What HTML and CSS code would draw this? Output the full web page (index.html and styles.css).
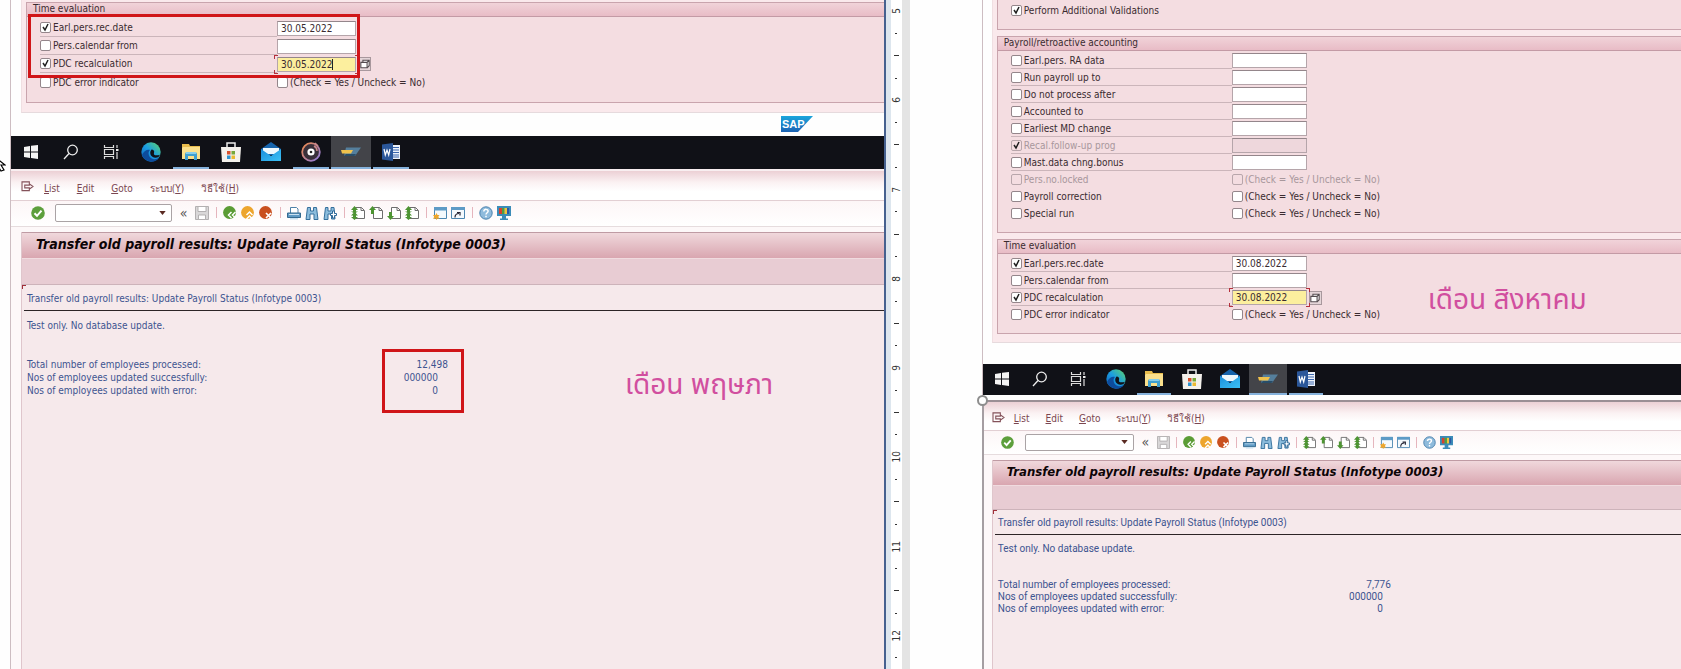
FILE: index.html
```html
<!DOCTYPE html>
<html lang="th">
<head>
<meta charset="utf-8">
<title>Transfer old payroll results</title>
<link rel="stylesheet" href="styles.css">
</head>
<body>
<svg class="sprite" aria-hidden="true">
  <defs>
    <linearGradient id="g-edge" x1="0" y1="1" x2="1" y2="0"><stop offset="0" stop-color="#0f5fb8"/><stop offset=".5" stop-color="#1b9de2"/><stop offset="1" stop-color="#5fd668"/></linearGradient>
    <linearGradient id="g-mail" x1="0" y1="0" x2="1" y2="1"><stop offset="0" stop-color="#1b8fdc"/><stop offset="1" stop-color="#3cc0f4"/></linearGradient>
    <linearGradient id="g-groove" x1="0" y1="0" x2="1" y2="1"><stop offset="0" stop-color="#f08a4a"/><stop offset="1" stop-color="#8c7be0"/></linearGradient>
    <linearGradient id="g-sap" x1="0" y1="0" x2="0" y2="1"><stop offset="0" stop-color="#1aa5dc"/><stop offset="1" stop-color="#1b62b4"/></linearGradient>
  </defs>
  <symbol id="t-win" viewBox="0 0 20 20"><path fill="#f4f4f4" d="M3 5l6-1v5.500H3zM10 3.800L17 3v6.500h-7zM3 10.500h6V16l-6-1zM10 10.500h7V17l-7-.9z"/></symbol>
  <symbol id="t-search" viewBox="0 0 20 20"><g fill="none" stroke="#eee" stroke-width="1.300"><circle cx="11.500" cy="8" r="4.800"/><path d="M8 11.500L3 17"/></g></symbol>
  <symbol id="t-task" viewBox="0 0 20 20"><path fill="none" stroke="#ddd" stroke-width="1.200" d="M3.500 3v2.500h9V3M3.500 7.500h9v5h-9zM3.500 17v-2.500h9V17M16 3v3M16 10v7"/><path fill="#eee" d="M15 7h2.500v2H15z"/></symbol>
  <symbol id="t-edge" viewBox="0 0 20 20"><circle cx="10" cy="10" r="9.700" fill="url(#g-edge)"/><path fill="#0d4c9c" d="M1 13C3 8 7 7 9 8c-3 3-1 8 3 9 2 .5 4 0 6-1-3 4-8 4.500-12 2.500-2.500-1.300-4-3-5-5.500z"/><path fill="#101218" d="M10.500 7.500c2 0 3.200 1.500 2.500 3.500-.8 2 1.500 3 6 1.800L17.500 15c-3 1.500-7 .5-8-2.500-.6-2-.2-3.500 1-5z"/></symbol>
  <symbol id="t-folder" viewBox="0 0 20 20"><path fill="#e9bd4d" d="M1 2h7l1 2h10v13H1z"/><path fill="#fbe08c" d="M2 5h17v12H1V6z"/><path fill="#3f9fd0" d="M4 12l1-2h10l1 2v6h-3v-4H7v4H4z"/><path fill="#86cdea" d="M5 10h10v2H5z"/></symbol>
  <symbol id="t-store" viewBox="0 0 20 20"><path fill="none" stroke="#eee" stroke-width="1.500" d="M6 7V1h8v6"/><path fill="#f4f1ec" d="M0 5h20l-1 15H1z"/><path fill="#d8512d" d="M6 9h3.500v3.500H6z"/><path fill="#76a83a" d="M10.500 9H14v3.500h-3.500z"/><path fill="#2f94d0" d="M6 13.500h3.500V17H6z"/><path fill="#eaba32" d="M10.500 13.500H14V17h-3.500z"/></symbol>
  <symbol id="t-mail" viewBox="0 0 20 20"><path fill="#1664ac" d="M0 7l10-7 10 7v6H0z"/><path fill="#eef8fd" d="M2 6h16v6H2z"/><path fill="url(#g-mail)" d="M0 7l10 7 10-7v12H0z"/></symbol>
  <symbol id="t-groove" viewBox="0 0 20 20"><circle cx="10" cy="10" r="8.800" fill="#39303a" stroke="url(#g-groove)" stroke-width="1.800"/><path fill="none" stroke="#c9888a" stroke-width="1.500" d="M13 4c2 1 3 3 3 5M14 1l3 3"/><circle cx="10" cy="10" r="3.600" fill="#fff"/><circle cx="10" cy="10" r="1.300" fill="#222"/></symbol>
  <symbol id="t-sap" viewBox="0 0 20 20"><path fill="#557f9c" d="M5 5.500h15L14 14H3z"/><path fill="#294d68" d="M5 12h10l-1.500 2H3z"/><path fill="#f0c24c" d="M0 8h12l-2 3.500H1z"/></symbol>
  <symbol id="t-word" viewBox="0 0 20 20"><path fill="#eef3fa" d="M10 3h9v14h-9z"/><path stroke="#3a66ae" d="M12 5.500h6M12 8h6M12 10.500h6M12 13h6M12 15h6"/><path fill="#2b579a" d="M1 2.500L12 1v18L1 17.500z"/><path fill="none" stroke="#fff" stroke-width="1.200" d="M3 7l1.300 6L6 8l1.700 5L9 7"/></symbol>

  <symbol id="i-exit" viewBox="0 0 14 12"><path fill="none" stroke="#84525a" stroke-width="1.200" d="M9 3V1H1v9.500h8V9M4 4.500h5V3l4 3-4 3V7.500H4z"/></symbol>
  <symbol id="i-ok" viewBox="0 0 14 14"><circle cx="7" cy="7" r="6.800" fill="#5d9f3c"/><path fill="none" stroke="#fff" stroke-width="2" d="M3.500 7.200L6 9.800l4.500-5.200"/></symbol>
  <symbol id="i-save" viewBox="0 0 14 14"><path fill="#d9d7d8" stroke="#b3b0b1" d="M.5.500h13v13H.5z"/><path fill="#fff" stroke="#b3b0b1" d="M3 .5h8v5H3zM3.500 9h7v4.500h-7z"/></symbol>
  <symbol id="i-back" viewBox="0 0 14 14"><circle cx="6.500" cy="6.500" r="6.400" fill="#5b9c35"/><path fill="none" stroke="#fff" stroke-width="1.500" d="M8.500 6L5.500 9l3 3M12.500 6l-3 3 3 3"/></symbol>
  <symbol id="i-up" viewBox="0 0 14 14"><circle cx="6.500" cy="6.500" r="6.400" fill="#eda52d"/><path fill="none" stroke="#fff" stroke-width="1.500" d="M5.500 9l3-3 3 3M5.500 13l3-3 3 3"/></symbol>
  <symbol id="i-cancel" viewBox="0 0 14 14"><circle cx="6.500" cy="6.500" r="6.400" fill="#c9501f"/><path stroke="#fff" stroke-width="1.700" d="M7 7l5 5M12 7l-5 5"/></symbol>
  <symbol id="i-print" viewBox="0 0 14 14"><path fill="#fff" stroke="#4d81a8" d="M3.500 7V1.500h6L11 3v4"/><path fill="#5f9ac4" stroke="#33698f" d="M.5 7h13v4.500H.5z"/><path fill="#c8e0f0" d="M2 8h10v1H2zM3 12h8v1.500H3z"/></symbol>
  <symbol id="i-find" viewBox="0 0 14 14"><path fill="#8cbcdc" stroke="#356f9c" d="M2.500 1.500h3V5h3V1.500h3L13 13.500H9V8H5v5.500H1z"/></symbol>
  <symbol id="i-findnext" viewBox="0 0 14 14"><path fill="#8cbcdc" stroke="#356f9c" d="M2.500 1.500h2.500V5h3V1.500h3L12 13H8.500V8H5v5.500H1z"/><path fill="#fff" stroke="#2d6796" d="M9.500 5h2v2.500h2v2h-2V12h-2V9.500h-2v-2h2z"/></symbol>
  <symbol id="i-first" viewBox="0 0 14 14"><path fill="#fff" stroke="#6d6d6d" d="M4.500 1.500h6l3 3v8h-9zM10 1.500v3h3"/><path fill="#4d9432" d="M3.500 0L7 4H5v1.500l2 0-3.500 2L0 5.500h2V4H0zM3.500 6L7 9.500H5V11h2l-3.500 3L0 11h2V9.500H0z"/></symbol>
  <symbol id="i-prev" viewBox="0 0 14 14"><path fill="#fff" stroke="#6d6d6d" d="M4.500 1.500h6l3 3v8h-9zM10 1.500v3h3"/><path fill="#4d9432" d="M3.500 0L7 4H5v4H2V4H0z"/></symbol>
  <symbol id="i-next" viewBox="0 0 14 14"><path fill="#fff" stroke="#6d6d6d" d="M4.500 1.500h6l3 3v8h-9zM10 1.500v3h3"/><path fill="#4d9432" d="M3.500 14L7 10H5V6H2v4H0z"/></symbol>
  <symbol id="i-session" viewBox="0 0 14 14"><path fill="#f4f9fd" stroke="#4c86b1" d="M1.500 1.500h12v11h-12z"/><path fill="#5d9bc6" d="M1 1h13v3.500H1z"/><path fill="#eda62c" d="M3.500 7l1 2 2 .0-1.200 1.700L6.500 13l-2-.6L3.500 14l-1-1.700L0 13l1.200-2.200L0 9h2.500z"/></symbol>
  <symbol id="i-shortcut" viewBox="0 0 14 14"><path fill="#f4f9fd" stroke="#4c86b1" d="M.5 1.500h13v11H.5z"/><path fill="#5d9bc6" d="M0 1h14v3H0z"/><path fill="none" stroke="#223" stroke-width="1.200" d="M4 11.500c0-2.500 1.500-4 4-4M6 6.500h3v3"/></symbol>
  <symbol id="i-help" viewBox="0 0 14 14"><circle cx="7" cy="7" r="6.200" fill="#8fbbdc" stroke="#4c82ae"/><path fill="none" stroke="#fff" stroke-width="1.500" d="M4.800 5.500c0-3 4.500-2.600 4.300-.2C9 6.800 7 6.800 7 8.600M7 9.800v1.500"/></symbol>
  <symbol id="i-layout" viewBox="0 0 14 14"><path fill="#3b8cb8" d="M0 0h14v10H0zM5 10h4v2.500H5zM3 12.500h8V14H3z"/><path fill="#d8412c" d="M2 2h3v6H2z"/><path fill="#4ca044" d="M5 2h2.500v6H5z"/><path fill="#f0c53a" d="M7.500 2H10v6H7.500z"/><path fill="#2b56a5" d="M10 2h2v6h-2z"/></symbol>
  <symbol id="i-multi" viewBox="0 0 12 12"><path fill="#fff" stroke="#544c50" stroke-width="1.300" d="M3.500 4V1.500h7.500V8L8.500 10.500M8.500 4L11 1.500"/><path fill="#fff" stroke="#544c50" stroke-width="1.300" d="M1 4h7.500v6.500H1z"/></symbol>
</svg>

<main class="page">
  <section class="shot shot-may">
    <svg class="pointer" viewBox="0 0 6 16" aria-hidden="true"><path fill="#fff" stroke="#000" stroke-width="1.200" d="M-6 0L5 9H1l3 5-3 1-2.500-4"/></svg>
    <div class="form-screen">
      <fieldset class="group">
        <legend class="group-title">Time evaluation</legend>
        <div class="rows">
          <div class="row lined"><label class="check"><input type="checkbox" checked>Earl.pers.rec.date</label><input class="field" type="text" value="30.05.2022" aria-label="Earl.pers.rec.date"></div>
          <div class="row lined"><label class="check"><input type="checkbox">Pers.calendar from</label><input class="field" type="text" aria-label="Pers.calendar from"></div>
          <div class="row lined"><label class="check"><input type="checkbox" checked>PDC recalculation</label><span class="focus caret"><input class="field" type="text" value="30.05.2022" aria-label="PDC recalculation"></span><button class="multi" type="button" aria-label="Multiple selection"><svg><use href="#i-multi"/></svg></button></div>
          <div class="row"><label class="check"><input type="checkbox">PDC error indicator</label><label class="check"><input type="checkbox">(Check = Yes / Uncheck = No)</label></div>
        </div>
      </fieldset>
      <div class="mark mark-form"></div>
    </div>
    <div class="brand">
      <svg class="sap" viewBox="0 0 32 16" role="img" aria-label="SAP"><path fill="url(#g-sap)" d="M0 0h32L17 16H0z"/><text x="1" y="12" class="sap-text">SAP</text></svg>
    </div>
    <nav class="taskbar" aria-label="Taskbar">
      <button type="button" aria-label="Start"><svg><use href="#t-win"/></svg></button>
      <button type="button" aria-label="Search"><svg><use href="#t-search"/></svg></button>
      <button type="button" aria-label="Task view"><svg><use href="#t-task"/></svg></button>
      <button type="button" aria-label="Edge"><svg><use href="#t-edge"/></svg></button>
      <button type="button" class="open" aria-label="Explorer"><svg><use href="#t-folder"/></svg></button>
      <button type="button" aria-label="Store"><svg><use href="#t-store"/></svg></button>
      <button type="button" aria-label="Mail"><svg><use href="#t-mail"/></svg></button>
      <button type="button" class="open" aria-label="Groove"><svg><use href="#t-groove"/></svg></button>
      <button type="button" class="open active" aria-label="SAP Logon"><svg><use href="#t-sap"/></svg></button>
      <button type="button" class="open" aria-label="Word"><svg><use href="#t-word"/></svg></button>
    </nav>
    <div class="window">
      <nav class="menu" aria-label="Menu">
        <svg class="exit"><use href="#i-exit"/></svg>
        <button type="button"><u>L</u>ist</button><button type="button"><u>E</u>dit</button><button type="button"><u>G</u>oto</button><button type="button">ระบบ(<u>Y</u>)</button><button type="button">วิธีใช้(<u>H</u>)</button>
      </nav>
      <div class="tools">
        <button type="button" aria-label="Enter"><svg><use href="#i-ok"/></svg></button>
        <select class="command" aria-label="Command"><option></option></select>
        <button type="button" class="collapse">«</button>
        <button type="button" aria-label="Save"><svg><use href="#i-save"/></svg></button>
        <i class="sep"></i>
        <button type="button" aria-label="Back"><svg><use href="#i-back"/></svg></button>
        <button type="button" aria-label="Exit"><svg><use href="#i-up"/></svg></button>
        <button type="button" aria-label="Cancel"><svg><use href="#i-cancel"/></svg></button>
        <i class="sep"></i>
        <button type="button" aria-label="Print"><svg><use href="#i-print"/></svg></button>
        <button type="button" aria-label="Find"><svg><use href="#i-find"/></svg></button>
        <button type="button" aria-label="Find next"><svg><use href="#i-findnext"/></svg></button>
        <i class="sep"></i>
        <button type="button" aria-label="First page"><svg><use href="#i-first"/></svg></button>
        <button type="button" aria-label="Previous page"><svg><use href="#i-prev"/></svg></button>
        <button type="button" aria-label="Next page"><svg><use href="#i-next"/></svg></button>
        <button type="button" aria-label="Last page"><svg><use href="#i-first"/></svg></button>
        <i class="sep"></i>
        <button type="button" aria-label="New session"><svg><use href="#i-session"/></svg></button>
        <button type="button" aria-label="Shortcut"><svg><use href="#i-shortcut"/></svg></button>
        <i class="sep"></i>
        <button type="button" aria-label="Help"><svg><use href="#i-help"/></svg></button>
        <button type="button" aria-label="Layout"><svg><use href="#i-layout"/></svg></button>
      </div>
      <div class="result">
        <h1>Transfer old payroll results: Update Payroll Status (Infotype 0003)</h1>
        <div class="appbar"></div>
        <div class="report">
          <p class="report-head">Transfer old payroll results: Update Payroll Status (Infotype 0003)</p>
          <p class="report-note">Test only. No database update.</p>
          <table>
            <tr><th scope="row">Total number of employees processed:</th><td class="total">12,498</td></tr>
            <tr><th scope="row">Nos of employees updated successfully:</th><td>000000</td></tr>
            <tr><th scope="row">Nos of employees updated with error:</th><td>0</td></tr>
          </table>
          <div class="mark mark-total"></div>
          <p class="month">เดือน พฤษภา</p>
        </div>
      </div>
    </div>
  </section>

  <div class="ruler" aria-hidden="true">
    <b>5</b><i></i><s></s><i></i><b>6</b><i></i><s></s><i></i><b>7</b><i></i><s></s><i></i><b>8</b><i></i><s></s><i></i><b>9</b><i></i><s></s><i></i><b>10</b><i></i><s></s><i></i><b>11</b><i></i><s></s><i></i><b>12</b><i></i>
  </div>

  <section class="shot shot-aug">
    <div class="form-screen">
      <div class="group cut">
        <div class="rows"><div class="row"><label class="check"><input type="checkbox" checked>Perform Additional Validations</label></div></div>
      </div>
      <fieldset class="group">
        <legend class="group-title">Payroll/retroactive accounting</legend>
        <div class="rows">
          <div class="row lined"><label class="check"><input type="checkbox">Earl.pers. RA data</label><input class="field" type="text" aria-label="Earl.pers. RA data"></div>
          <div class="row lined"><label class="check"><input type="checkbox">Run payroll up to</label><input class="field" type="text" aria-label="Run payroll up to"></div>
          <div class="row lined"><label class="check"><input type="checkbox">Do not process after</label><input class="field" type="text" aria-label="Do not process after"></div>
          <div class="row lined"><label class="check"><input type="checkbox">Accounted to</label><input class="field" type="text" aria-label="Accounted to"></div>
          <div class="row lined"><label class="check"><input type="checkbox">Earliest MD change</label><input class="field" type="text" aria-label="Earliest MD change"></div>
          <div class="row lined"><label class="check off"><input type="checkbox" checked disabled>Recal.follow-up prog</label><input class="field" type="text" disabled aria-label="Recal.follow-up prog"></div>
          <div class="row lined"><label class="check"><input type="checkbox">Mast.data chng.bonus</label><input class="field" type="text" aria-label="Mast.data chng.bonus"></div>
          <div class="row"><label class="check off"><input type="checkbox" disabled>Pers.no.locked</label><label class="check off"><input type="checkbox" disabled>(Check = Yes / Uncheck = No)</label></div>
          <div class="row"><label class="check"><input type="checkbox">Payroll correction</label><label class="check"><input type="checkbox">(Check = Yes / Uncheck = No)</label></div>
          <div class="row"><label class="check"><input type="checkbox">Special run</label><label class="check"><input type="checkbox">(Check = Yes / Uncheck = No)</label></div>
        </div>
      </fieldset>
      <fieldset class="group">
        <legend class="group-title">Time evaluation</legend>
        <div class="rows">
          <div class="row lined"><label class="check"><input type="checkbox" checked>Earl.pers.rec.date</label><input class="field" type="text" value="30.08.2022" aria-label="Earl.pers.rec.date"></div>
          <div class="row lined"><label class="check"><input type="checkbox">Pers.calendar from</label><input class="field" type="text" aria-label="Pers.calendar from"></div>
          <div class="row lined"><label class="check"><input type="checkbox" checked>PDC recalculation</label><span class="focus"><input class="field" type="text" value="30.08.2022" aria-label="PDC recalculation"></span><button class="multi" type="button" aria-label="Multiple selection"><svg><use href="#i-multi"/></svg></button></div>
          <div class="row"><label class="check"><input type="checkbox">PDC error indicator</label><label class="check"><input type="checkbox">(Check = Yes / Uncheck = No)</label></div>
        </div>
        <p class="month">เดือน สิงหาคม</p>
      </fieldset>
    </div>
    <div class="brand"></div>
    <nav class="taskbar" aria-label="Taskbar">
      <button type="button" aria-label="Start"><svg><use href="#t-win"/></svg></button>
      <button type="button" aria-label="Search"><svg><use href="#t-search"/></svg></button>
      <button type="button" aria-label="Task view"><svg><use href="#t-task"/></svg></button>
      <button type="button" aria-label="Edge"><svg><use href="#t-edge"/></svg></button>
      <button type="button" class="open" aria-label="Explorer"><svg><use href="#t-folder"/></svg></button>
      <button type="button" aria-label="Store"><svg><use href="#t-store"/></svg></button>
      <button type="button" aria-label="Mail"><svg><use href="#t-mail"/></svg></button>
      <button type="button" class="open active" aria-label="SAP Logon"><svg><use href="#t-sap"/></svg></button>
      <button type="button" class="open" aria-label="Word"><svg><use href="#t-word"/></svg></button>
    </nav>
    <div class="window">
      <span class="handle"></span>
      <nav class="menu" aria-label="Menu">
        <svg class="exit"><use href="#i-exit"/></svg>
        <button type="button"><u>L</u>ist</button><button type="button"><u>E</u>dit</button><button type="button"><u>G</u>oto</button><button type="button">ระบบ(<u>Y</u>)</button><button type="button">วิธีใช้(<u>H</u>)</button>
      </nav>
      <div class="tools">
        <button type="button" aria-label="Enter"><svg><use href="#i-ok"/></svg></button>
        <select class="command" aria-label="Command"><option></option></select>
        <button type="button" class="collapse">«</button>
        <button type="button" aria-label="Save"><svg><use href="#i-save"/></svg></button>
        <i class="sep"></i>
        <button type="button" aria-label="Back"><svg><use href="#i-back"/></svg></button>
        <button type="button" aria-label="Exit"><svg><use href="#i-up"/></svg></button>
        <button type="button" aria-label="Cancel"><svg><use href="#i-cancel"/></svg></button>
        <i class="sep"></i>
        <button type="button" aria-label="Print"><svg><use href="#i-print"/></svg></button>
        <button type="button" aria-label="Find"><svg><use href="#i-find"/></svg></button>
        <button type="button" aria-label="Find next"><svg><use href="#i-findnext"/></svg></button>
        <i class="sep"></i>
        <button type="button" aria-label="First page"><svg><use href="#i-first"/></svg></button>
        <button type="button" aria-label="Previous page"><svg><use href="#i-prev"/></svg></button>
        <button type="button" aria-label="Next page"><svg><use href="#i-next"/></svg></button>
        <button type="button" aria-label="Last page"><svg><use href="#i-first"/></svg></button>
        <i class="sep"></i>
        <button type="button" aria-label="New session"><svg><use href="#i-session"/></svg></button>
        <button type="button" aria-label="Shortcut"><svg><use href="#i-shortcut"/></svg></button>
        <i class="sep"></i>
        <button type="button" aria-label="Help"><svg><use href="#i-help"/></svg></button>
        <button type="button" aria-label="Layout"><svg><use href="#i-layout"/></svg></button>
      </div>
      <div class="result">
        <h1>Transfer old payroll results: Update Payroll Status (Infotype 0003)</h1>
        <div class="appbar"></div>
        <div class="report">
          <p class="report-head">Transfer old payroll results: Update Payroll Status (Infotype 0003)</p>
          <p class="report-note">Test only. No database update.</p>
          <table>
            <tr><th scope="row">Total number of employees processed:</th><td class="total">7,776</td></tr>
            <tr><th scope="row">Nos of employees updated successfully:</th><td>000000</td></tr>
            <tr><th scope="row">Nos of employees updated with error:</th><td>0</td></tr>
          </table>
        </div>
      </div>
    </div>
  </section>
</main>
</body>
</html>
```
FILE: styles.css
```css
* { box-sizing: border-box; }
body {
  margin: 0;
  background: #fefefe;
  font-family: "DejaVu Sans Condensed", "Noto Sans", sans-serif;
  color: #3a2b30;
}
button, input, select { font: inherit; color: inherit; margin: 0; padding: 0; border: 0; background: none; }
button { display: flex; align-items: center; justify-content: center; }
p, h1, fieldset { margin: 0; padding: 0; }
.sprite { position: absolute; width: 0; height: 0; }

.page { display: flex; height: 100vh; overflow: hidden; padding-left: 10px; }
.shot { display: flex; flex-direction: column; position: relative; min-width: 0; border-left: 1px solid #cdbdc2; }
.shot-may {
  --row: 18px; --label: 237px; --field: 79px; --text: 10px; --slot: 40px; --icon: 14px; --sep: 6px;
  --title: 14px; --line: 13px; --command: 117px;
  flex: 875 1 0; border-right: 2px solid #46618f;
}
.shot-aug {
  --row: 17px; --label: 221px; --field: 75px; --text: 10px; --slot: 38px; --icon: 13px; --sep: 5px;
  --title: 13px; --line: 12px; --command: 109px;
  flex: 700 1 0; margin-left: 72px;
}
.pointer { position: absolute; left: -11px; top: 156px; width: 6px; height: 16px; }

/* selection form */
.form-screen {
  position: relative; margin-left: 10px; padding: 2px 0 9px 4px;
  display: flex; flex-direction: column; gap: 6px;
  background: #fae9ec; border-bottom: 1px solid #e6dadd; border-left: 1px solid #f0dfe2;
  font-size: var(--text);
}
.shot-aug .form-screen { margin-left: 9px; padding-top: 0; padding-bottom: 8px; }
.group { position: relative; min-width: 0; background: #f4dde1; border: 1px solid #c9a4ad; border-right: 0; }
.group-title {
  float: left; width: 100%; height: 14px; padding: 0 6px; line-height: 12px; font-size: var(--text);
  background: linear-gradient(#f1d3d9, #e8bcc6); border-bottom: 1px solid #c39aa5;
}
.rows { clear: both; padding: 2px 0 11px 13px; }
.shot-aug .rows { padding: 1px 0 10px 13px; }
.shot-aug .cut { border-top: 0; }
.shot-aug .cut .rows { padding-top: 2px; }
.row { display: flex; align-items: center; height: var(--row); }
.lined .check:first-child { border-bottom: 1px solid #cbb5ba; }
.check { display: flex; align-items: center; gap: 2px; height: 100%; white-space: nowrap; }
.row > .check:first-child { flex: 0 0 var(--label); }
.check input {
  appearance: none; flex: none; width: 11px; height: 11px; border: 1px solid #94868b; border-radius: 2px; background: #fff;
}
.check input:checked {
  background: #fff url("data:image/svg+xml,%3Csvg xmlns='http://www.w3.org/2000/svg' viewBox='0 0 9 9'%3E%3Cpath fill='none' stroke='%23222' stroke-width='1.500' d='M2 4l2 3 3-6'/%3E%3C/svg%3E") center / 9px;
}
.off { color: #a8979c; }
.check input:disabled { background-color: #f4dde1; border-color: #b8a6ab; }
.field {
  width: var(--field); height: 15px; padding: 0 3px; line-height: 13px;
  background: #fff; border: 1px solid #b5a5aa; border-top-color: #94868b;
}
.field:disabled { background: #eed7dc; }
.focus { position: relative; display: flex; }
.focus .field { background: #fcef9e; }
.focus::before {
  --c: linear-gradient(#b5303c, #b5303c) no-repeat;
  content: ""; position: absolute; inset: -2px -3px;
  background: var(--c) 0 0 / 4px 1px, var(--c) 0 0 / 1px 4px, var(--c) 100% 0 / 4px 1px, var(--c) 100% 0 / 1px 4px,
    var(--c) 0 100% / 4px 1px, var(--c) 0 100% / 1px 4px, var(--c) 100% 100% / 4px 1px, var(--c) 100% 100% / 1px 4px;
}
.caret::after { content: ""; position: absolute; left: 55px; top: 2px; width: 1px; height: 11px; background: #222; }
.multi { width: 13px; height: 14px; margin-left: 2px; background: #e4d5d8; border: 1px solid #a8989d; }
.multi svg { width: 10px; height: 10px; }
.brand { display: flex; justify-content: flex-end; align-items: flex-start; height: 23px; padding: 3px 71px 0 0; }
.shot-aug .brand { height: 21px; }
.sap { width: 32px; height: 16px; }
.sap-text { font: bold 11px "Liberation Sans", sans-serif; fill: #fff; }

/* red highlight frames and month captions */
.mark { position: absolute; border: 3px solid #d01518; }
.mark-form { left: 6px; top: 14px; width: 332px; height: 64px; }
.mark-total { left: 360px; top: 64px; width: 82px; height: 64px; }
.month { position: absolute; font: 28px "Noto Sans Thai", "Noto Sans", "DejaVu Sans", sans-serif; line-height: 36px; color: #d14f9f; white-space: nowrap; }
.shot-may .month { left: 603px; top: 83px; }
.shot-aug .month { left: 430px; top: 43px; }

/* windows taskbar */
.taskbar { display: flex; height: 33px; background: #101117; }
.shot-aug .taskbar { height: 31px; }
.taskbar button { width: var(--slot); border-bottom: 2px solid transparent; }
.taskbar svg { width: 20px; height: 20px; }
.taskbar .open { border-image: linear-gradient(90deg, transparent 8%, #86b2dc 8% 92%, transparent 92%) 1; border-width: 0 0 2px; }
.taskbar .active { background: #434449; border-image: none; border-color: #86b2dc; }

/* result window */
.window { position: relative; flex: 1; display: flex; flex-direction: column; background: #fdf8f9; }
.shot-may .window { border-top: 2px solid #f8eef0; }
.shot-aug .window { margin: 5px 0 0 -1px; border-top: 2px solid #9b8f95; border-left: 2px solid #a59ea2; }
.handle { position: absolute; left: -7px; top: -7px; width: 11px; height: 11px; border: 2px solid #8e8e8e; border-radius: 50%; background: #fff; }
.menu {
  display: flex; align-items: center; height: 30px; padding: 5px 0 0 10px; gap: 17px; font-size: var(--text); color: #7b4650;
  background: linear-gradient(#ecd0d5, #fbf2f3 40%, #fff 70%); border-bottom: 1px solid #e2cfd3;
}
.shot-aug .menu { height: 29px; padding-left: 8px; gap: 16px; }
.exit { width: 13px; height: 11px; margin: 0 -7px 3px 0; }
.tools {
  display: flex; align-items: center; gap: 4px; height: 26px; padding: 0 0 2px 20px;
  background: linear-gradient(#fdf6f7, #fff); border-bottom: 1px solid #e6dcde;
}
.shot-aug .tools { height: 24px; padding: 0 0 1px 17px; }
.tools svg { width: var(--icon); height: var(--icon); }
.command {
  appearance: none; width: var(--command); height: 18px; margin: 0 3px 0 6px; border: 1px solid #aaa3a5; border-radius: 2px;
  background: #fff url("data:image/svg+xml,%3Csvg xmlns='http://www.w3.org/2000/svg' viewBox='0 0 8 5'%3E%3Cpath fill='%235a2a22' d='M0 0h8L4 5z'/%3E%3C/svg%3E") no-repeat right 5px center / 7px 4px;
}
.shot-aug .command { height: 17px; margin-left: 7px; }
.collapse { width: 9px; margin-right: 3px; font-size: 14px; line-height: 14px; color: #555; }
.sep { width: var(--sep); height: 11px; background: linear-gradient(#e5b5bd, #e5b5bd) center / 1px 100% no-repeat; }
.result { flex: 1; display: flex; flex-direction: column; margin: 5px 0 0 10px; border-left: 1px solid #dfc6cc; }
.shot-aug .result { margin-left: 8px; }
h1 {
  height: 26px; padding-left: 14px; border-top: 1px solid #bf9ba4; background: linear-gradient(#f0d8dc, #d9a6b0);
  font: italic bold var(--title) "DejaVu Sans Condensed", sans-serif; line-height: 23px; color: #0c0406; white-space: nowrap;
}
.shot-aug h1 { height: 25px; line-height: 22px; }
.appbar { height: 27px; background: #e8ccd3; border-bottom: 1px solid #cdb3ba; border-top: 1px solid #f0dbdf; }
.shot-aug .appbar { height: 25px; }
.report {
  position: relative; flex: 1; font-size: var(--text); line-height: var(--line); color: #3d5490;
  background:
    linear-gradient(#a0303a, #a0303a) 0 0 / 4px 1px no-repeat,
    linear-gradient(#a0303a, #a0303a) 0 0 / 1px 4px no-repeat,
    #f6e9eb;
}
.shot-aug .report { font-family: Roboto, sans-serif; }
.report-head { margin-left: 2px; padding: 7px 3px 5px; border-bottom: 1px solid #2c2426; }
.report-note { padding: 8px 5px 0; }
table { margin: 26px 0 0 5px; border-collapse: collapse; }
.shot-aug table { margin-top: 24px; }
th, td { padding: 0; font-weight: normal; text-align: left; white-space: nowrap; }
th { width: 300px; }
td { width: 121px; padding-right: 10px; text-align: right; }
td.total { padding-right: 0; }
.shot-aug td { width: 93px; padding-right: 8px; }
.shot-aug td.total { padding-right: 0; }

/* vertical page ruler */
.ruler {
  flex: 0 0 24px; display: grid; grid-auto-rows: 1fr; justify-items: center; align-items: center; padding: 0 8px 0 5px;
  background: linear-gradient(90deg, #dde6ee 5px, #fff 5px 16px, #e4e4e4 16px);
}
.ruler b { font: 10px "DejaVu Sans Condensed", sans-serif; line-height: 11px; writing-mode: vertical-rl; transform: rotate(180deg); color: #333; }
.ruler i { width: 2px; height: 1px; background: #333; }
.ruler s { width: 5px; height: 1px; background: #333; }
```
